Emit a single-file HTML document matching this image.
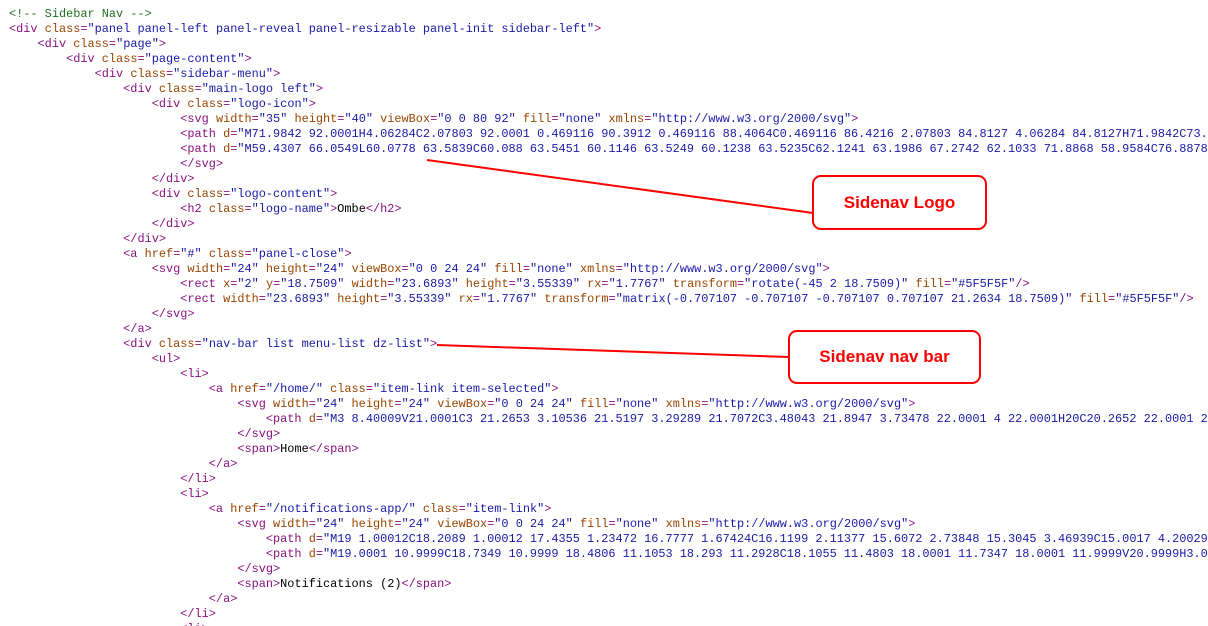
<!DOCTYPE html>
<html><head><meta charset="utf-8"><style>
html,body{margin:0;padding:0;background:#fff;width:1208px;height:626px;overflow:hidden;position:relative}
.wrap{position:absolute;left:0;top:0;width:1208px;height:626px;overflow:hidden}
pre{margin:0;position:absolute;left:9px;top:7px;font-family:"Liberation Mono",monospace;font-size:11.9px;line-height:15px;color:#000;white-space:pre}
.t{color:#881280}.a{color:#994500}.v{color:#1a1aa6}.c{color:#236e25}
.box{position:absolute;border:2px solid #f00;border-radius:9px;background:#fff;color:#f00;font-family:"Liberation Sans",sans-serif;font-weight:bold;font-size:17px;display:flex;align-items:center;justify-content:center;box-sizing:border-box}
svg{position:absolute;left:0;top:0}
</style></head><body>
<div class="wrap"><pre><span class="c">&lt;!-- Sidebar Nav --&gt;</span>
<span class="t">&lt;div </span><span class="a">class</span><span class="t">=</span><span class="v">"panel panel-left panel-reveal panel-resizable panel-init sidebar-left"</span><span class="t">&gt;</span>
    <span class="t">&lt;div </span><span class="a">class</span><span class="t">=</span><span class="v">"page"</span><span class="t">&gt;</span>
        <span class="t">&lt;div </span><span class="a">class</span><span class="t">=</span><span class="v">"page-content"</span><span class="t">&gt;</span>
            <span class="t">&lt;div </span><span class="a">class</span><span class="t">=</span><span class="v">"sidebar-menu"</span><span class="t">&gt;</span>
                <span class="t">&lt;div </span><span class="a">class</span><span class="t">=</span><span class="v">"main-logo left"</span><span class="t">&gt;</span>
                    <span class="t">&lt;div </span><span class="a">class</span><span class="t">=</span><span class="v">"logo-icon"</span><span class="t">&gt;</span>
                        <span class="t">&lt;svg </span><span class="a">width</span><span class="t">=</span><span class="v">"35"</span> <span class="a">height</span><span class="t">=</span><span class="v">"40"</span> <span class="a">viewBox</span><span class="t">=</span><span class="v">"0 0 80 92"</span> <span class="a">fill</span><span class="t">=</span><span class="v">"none"</span> <span class="a">xmlns</span><span class="t">=</span><span class="v">"http://www.w3.org/2000/svg"</span><span class="t">&gt;</span>
                        <span class="t">&lt;path </span><span class="a">d</span><span class="t">=</span><span class="v">"M71.9842 92.0001H4.06284C2.07803 92.0001 0.469116 90.3912 0.469116 88.4064C0.469116 86.4216 2.07803 84.8127 4.06284 84.8127H71.9842C73.</span>
                        <span class="t">&lt;path </span><span class="a">d</span><span class="t">=</span><span class="v">"M59.4307 66.0549L60.0778 63.5839C60.088 63.5451 60.1146 63.5249 60.1238 63.5235C62.1241 63.1986 67.2742 62.1033 71.8868 58.9584C76.8878</span>
                        <span class="t">&lt;/svg&gt;</span>
                    <span class="t">&lt;/div&gt;</span>
                    <span class="t">&lt;div </span><span class="a">class</span><span class="t">=</span><span class="v">"logo-content"</span><span class="t">&gt;</span>
                        <span class="t">&lt;h2 </span><span class="a">class</span><span class="t">=</span><span class="v">"logo-name"</span><span class="t">&gt;</span>Ombe<span class="t">&lt;/h2&gt;</span>
                    <span class="t">&lt;/div&gt;</span>
                <span class="t">&lt;/div&gt;</span>
                <span class="t">&lt;a </span><span class="a">href</span><span class="t">=</span><span class="v">"#"</span> <span class="a">class</span><span class="t">=</span><span class="v">"panel-close"</span><span class="t">&gt;</span>
                    <span class="t">&lt;svg </span><span class="a">width</span><span class="t">=</span><span class="v">"24"</span> <span class="a">height</span><span class="t">=</span><span class="v">"24"</span> <span class="a">viewBox</span><span class="t">=</span><span class="v">"0 0 24 24"</span> <span class="a">fill</span><span class="t">=</span><span class="v">"none"</span> <span class="a">xmlns</span><span class="t">=</span><span class="v">"http://www.w3.org/2000/svg"</span><span class="t">&gt;</span>
                        <span class="t">&lt;rect </span><span class="a">x</span><span class="t">=</span><span class="v">"2"</span> <span class="a">y</span><span class="t">=</span><span class="v">"18.7509"</span> <span class="a">width</span><span class="t">=</span><span class="v">"23.6893"</span> <span class="a">height</span><span class="t">=</span><span class="v">"3.55339"</span> <span class="a">rx</span><span class="t">=</span><span class="v">"1.7767"</span> <span class="a">transform</span><span class="t">=</span><span class="v">"rotate(-45 2 18.7509)"</span> <span class="a">fill</span><span class="t">=</span><span class="v">"#5F5F5F"</span><span class="t">/&gt;</span>
                        <span class="t">&lt;rect </span><span class="a">width</span><span class="t">=</span><span class="v">"23.6893"</span> <span class="a">height</span><span class="t">=</span><span class="v">"3.55339"</span> <span class="a">rx</span><span class="t">=</span><span class="v">"1.7767"</span> <span class="a">transform</span><span class="t">=</span><span class="v">"matrix(-0.707107 -0.707107 -0.707107 0.707107 21.2634 18.7509)"</span> <span class="a">fill</span><span class="t">=</span><span class="v">"#5F5F5F"</span><span class="t">/&gt;</span>
                    <span class="t">&lt;/svg&gt;</span>
                <span class="t">&lt;/a&gt;</span>
                <span class="t">&lt;div </span><span class="a">class</span><span class="t">=</span><span class="v">"nav-bar list menu-list dz-list"</span><span class="t">&gt;</span>
                    <span class="t">&lt;ul&gt;</span>
                        <span class="t">&lt;li&gt;</span>
                            <span class="t">&lt;a </span><span class="a">href</span><span class="t">=</span><span class="v">"/home/"</span> <span class="a">class</span><span class="t">=</span><span class="v">"item-link item-selected"</span><span class="t">&gt;</span>
                                <span class="t">&lt;svg </span><span class="a">width</span><span class="t">=</span><span class="v">"24"</span> <span class="a">height</span><span class="t">=</span><span class="v">"24"</span> <span class="a">viewBox</span><span class="t">=</span><span class="v">"0 0 24 24"</span> <span class="a">fill</span><span class="t">=</span><span class="v">"none"</span> <span class="a">xmlns</span><span class="t">=</span><span class="v">"http://www.w3.org/2000/svg"</span><span class="t">&gt;</span>
                                    <span class="t">&lt;path </span><span class="a">d</span><span class="t">=</span><span class="v">"M3 8.40009V21.0001C3 21.2653 3.10536 21.5197 3.29289 21.7072C3.48043 21.8947 3.73478 22.0001 4 22.0001H20C20.2652 22.0001 2</span>
                                <span class="t">&lt;/svg&gt;</span>
                                <span class="t">&lt;span&gt;</span>Home<span class="t">&lt;/span&gt;</span>
                            <span class="t">&lt;/a&gt;</span>
                        <span class="t">&lt;/li&gt;</span>
                        <span class="t">&lt;li&gt;</span>
                            <span class="t">&lt;a </span><span class="a">href</span><span class="t">=</span><span class="v">"/notifications-app/"</span> <span class="a">class</span><span class="t">=</span><span class="v">"item-link"</span><span class="t">&gt;</span>
                                <span class="t">&lt;svg </span><span class="a">width</span><span class="t">=</span><span class="v">"24"</span> <span class="a">height</span><span class="t">=</span><span class="v">"24"</span> <span class="a">viewBox</span><span class="t">=</span><span class="v">"0 0 24 24"</span> <span class="a">fill</span><span class="t">=</span><span class="v">"none"</span> <span class="a">xmlns</span><span class="t">=</span><span class="v">"http://www.w3.org/2000/svg"</span><span class="t">&gt;</span>
                                    <span class="t">&lt;path </span><span class="a">d</span><span class="t">=</span><span class="v">"M19 1.00012C18.2089 1.00012 17.4355 1.23472 16.7777 1.67424C16.1199 2.11377 15.6072 2.73848 15.3045 3.46939C15.0017 4.20029</span>
                                    <span class="t">&lt;path </span><span class="a">d</span><span class="t">=</span><span class="v">"M19.0001 10.9999C18.7349 10.9999 18.4806 11.1053 18.293 11.2928C18.1055 11.4803 18.0001 11.7347 18.0001 11.9999V20.9999H3.0</span>
                                <span class="t">&lt;/svg&gt;</span>
                                <span class="t">&lt;span&gt;</span>Notifications (2)<span class="t">&lt;/span&gt;</span>
                            <span class="t">&lt;/a&gt;</span>
                        <span class="t">&lt;/li&gt;</span>
                        <span class="t">&lt;li&gt;</span></pre></div>
<svg width="1208" height="626"><line x1="427" y1="160" x2="813" y2="213" stroke="#f00" stroke-width="2"/><line x1="437" y1="345" x2="789" y2="357" stroke="#f00" stroke-width="2"/></svg>
<div class="box" style="left:812px;top:175px;width:175px;height:55px">Sidenav Logo</div>
<div class="box" style="left:788px;top:330px;width:193px;height:54px">Sidenav nav bar</div>
</body></html>
